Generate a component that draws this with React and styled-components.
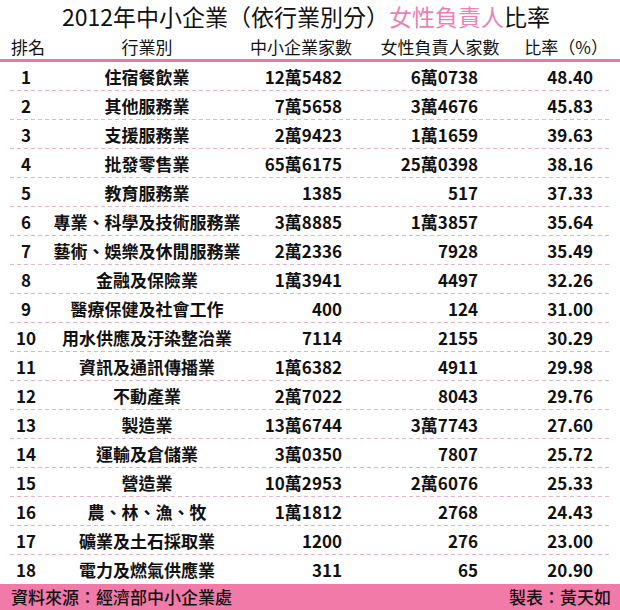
import styled, { createGlobalStyle } from "styled-components";

const GlobalStyle = createGlobalStyle`
	body {
		margin: 0;
		background: #ffffff;
		font-family: "Noto Sans CJK TC", "Noto Sans", sans-serif;
		color: #111111;
	}
`;

const PINK = "#f27aa8";

const rows = [
	["1", "住宿餐飲業", "12萬5482", "6萬0738", "48.40"],
	["2", "其他服務業", "7萬5658", "3萬4676", "45.83"],
	["3", "支援服務業", "2萬9423", "1萬1659", "39.63"],
	["4", "批發零售業", "65萬6175", "25萬0398", "38.16"],
	["5", "教育服務業", "1385", "517", "37.33"],
	["6", "專業、科學及技術服務業", "3萬8885", "1萬3857", "35.64"],
	["7", "藝術、娛樂及休閒服務業", "2萬2336", "7928", "35.49"],
	["8", "金融及保險業", "1萬3941", "4497", "32.26"],
	["9", "醫療保健及社會工作", "400", "124", "31.00"],
	["10", "用水供應及汙染整治業", "7114", "2155", "30.29"],
	["11", "資訊及通訊傳播業", "1萬6382", "4911", "29.98"],
	["12", "不動產業", "2萬7022", "8043", "29.76"],
	["13", "製造業", "13萬6744", "3萬7743", "27.60"],
	["14", "運輸及倉儲業", "3萬0350", "7807", "25.72"],
	["15", "營造業", "10萬2953", "2萬6076", "25.33"],
	["16", "農、林、漁、牧", "1萬1812", "2768", "24.43"],
	["17", "礦業及土石採取業", "1200", "276", "23.00"],
	["18", "電力及燃氣供應業", "311", "65", "20.90"],
];

const Page = styled.div`
	width: 620px;
	height: 610px;
	display: flex;
	flex-direction: column;
	overflow: hidden;
`;

const Title = styled.h1`
	margin: 0;
	padding: 0 8px 1px 0;
	line-height: 32px;
	font-size: 23px;
	font-weight: 400;
	text-align: center;
	white-space: nowrap;
	color: #111;
`;

const Accent = styled.span`
	color: #ee7fb2;
`;

const Grid = styled.div`
	display: grid;
	grid-template-columns: 52px 190px 118px 160px 100px;
	align-items: center;
`;

const HeadRow = styled(Grid)`
	height: 26px;
	border-bottom: 3px solid #e07aa8;
	font-size: 17px;
	font-weight: 400;
`;

const HeadCell = styled.div`
	text-align: ${(p) => p.$align || "center"};
	padding: ${(p) => p.$pad || "0"};
	white-space: nowrap;
`;

const Body = styled.div`
	display: flex;
	flex-direction: column;
`;

const Row = styled(Grid)`
	height: 29px;
	position: relative;
	font-size: 17px;
	font-weight: 700;
	&::after {
		content: "";
		position: absolute;
		left: 10px;
		right: 8px;
		bottom: 0;
		height: 1px;
		background: repeating-linear-gradient(
			to right,
			#e2b3c5 0 4px,
			transparent 4px 7px
		);
	}
	&:last-child::after {
		display: none;
	}
`;

const Cell = styled.div`
	text-align: ${(p) => p.$align || "center"};
	padding: ${(p) => p.$pad || "0"};
	white-space: nowrap;
	line-height: 29px;
`;

const Footer = styled.div`
	margin-top: auto;
	height: 26px;
	background: ${PINK};
	display: flex;
	align-items: center;
	justify-content: space-between;
	padding: 0 9px 2px 11px;
	box-sizing: border-box;
	font-size: 17px;
	font-weight: 500;
	color: #111;
`;

const App = () => {
	return (
		<Page>
			<GlobalStyle />
			<Title>
				2012年中小企業（依行業別分）<Accent>女性負責人</Accent>比率
			</Title>
			<HeadRow>
				<HeadCell $align="left" $pad="0 0 0 11px">排名</HeadCell>
				<HeadCell>行業別</HeadCell>
				<HeadCell>中小企業家數</HeadCell>
				<HeadCell>女性負責人家數</HeadCell>
				<HeadCell $align="right" $pad="0 12px 0 0">比率（%）</HeadCell>
			</HeadRow>
			<Body>
				{rows.map((r) => (
					<Row key={r[0]}>
						<Cell>{r[0]}</Cell>
						<Cell>{r[1]}</Cell>
						<Cell $align="right" $pad="0 18px 0 0">{r[2]}</Cell>
						<Cell $align="right" $pad="0 42px 0 0">{r[3]}</Cell>
						<Cell $align="right" $pad="0 27px 0 0">{r[4]}</Cell>
					</Row>
				))}
			</Body>
			<Footer>
				<span>資料來源：經濟部中小企業處</span>
				<span>製表：黃天如</span>
			</Footer>
		</Page>
	);
};

export default App;
